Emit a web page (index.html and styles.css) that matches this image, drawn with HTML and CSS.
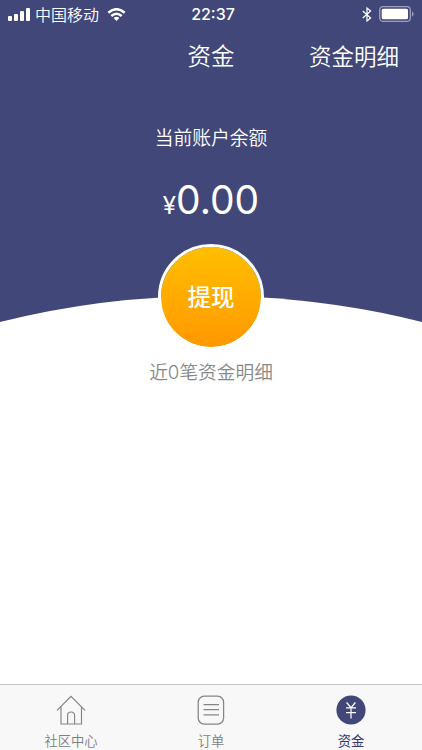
FILE: index.html
```html
<!DOCTYPE html>
<html lang="zh-CN">
<head>
<meta charset="utf-8">
<meta name="viewport" content="width=device-width, initial-scale=1">
<title>资金</title>
<link rel="stylesheet" href="styles.css">
</head>
<body>
<div class="app">
  <main class="content">
    <section class="hero">
      <svg class="hero-curve" viewBox="0 0 422 28" aria-hidden="true"><path d="M0 27A869 869 0 0 1 422 27V28H0Z" fill="#fff"/></svg>
      <div class="status">
        <div class="status-left">
          <svg class="signal" viewBox="0 0 23 14" fill="#fff"><rect x="0" y="9" width="4" height="5" rx="1"/><rect x="6" y="7" width="4" height="7" rx="1"/><rect x="12" y="4" width="4" height="10" rx="1"/><rect x="18" y="1" width="4" height="13" rx="1"/></svg>
          <span class="carrier">中国移动</span>
          <svg class="wifi" viewBox="0 0 18 13"><g fill="none" stroke="#fff" stroke-width="2.5"><path d="M.8 4.8Q9-2.4 17.2 4.8"/><path d="M3.8 8Q9 3.4 14.2 8"/></g><path d="M6.1 10Q9 7.6 11.9 10L9 13Z" fill="#fff"/></svg>
        </div>
        <time class="clock">22:37</time>
        <div class="status-right">
          <svg class="bluetooth" viewBox="0 0 10 15" fill="none" stroke="#fff" stroke-width="1.2"><path d="M.8 4 8.6 11 5 14V1L8.6 4 .8 11"/></svg>
          <svg class="battery" viewBox="0 0 36 16"><rect x=".7" y=".7" width="30.6" height="14.6" rx="3.2" fill="none" stroke="#9ea0c0" stroke-width="1.3"/><rect x="2.7" y="2.7" width="26.3" height="10.6" rx="1.5" fill="#fff"/><path d="M33 5.2Q36.4 8 33 10.8Z" fill="#9ea0c0"/></svg>
        </div>
      </div>
      <header class="nav">
        <h1 class="nav-title">资金</h1>
        <a class="nav-link">资金明细</a>
      </header>
      <p class="balance-label">当前账户余额</p>
      <p class="balance"><span class="currency">¥</span><span class="amount">0.00</span></p>
    </section>
    <button class="withdraw" type="button">提现</button>
    <p class="recent">近<span class="count">0</span>笔资金明细</p>
  </main>
  <nav class="tabs">
    <a class="tab">
      <svg class="tab-icon" viewBox="0 0 30 30" fill="none" stroke="#858585" stroke-width="1.15"><path d="M1 15.3 15 1.3 29 15.3M5 11.5V29H25.5V11.5M11.6 29V20.2Q11.6 17 15 17T18.6 20.2V29"/></svg>
      <span>社区中心</span>
    </a>
    <a class="tab">
      <svg class="tab-icon" viewBox="0 0 30 30" fill="none" stroke="#858585" stroke-width="1.25"><rect x="2.2" y="1.2" width="25.4" height="27.8" rx="6"/><path d="M7.5 9.5H23M7.5 14.7H23M7.5 19.8H23"/></svg>
      <span>订单</span>
    </a>
    <a class="tab tab-active">
      <svg class="tab-icon" viewBox="0 0 30 30"><circle cx="15" cy="15" r="14.6" fill="#424779"/><path d="M10.6 7.5 15 12.7 19.4 7.5M10 12.9H20M10 17.5H20M15 12.7V23.6" fill="none" stroke="#fff" stroke-width="1.25"/></svg>
      <span>资金</span>
    </a>
  </nav>
</div>
</body>
</html>
```
FILE: styles.css
```css
* {
  box-sizing: border-box;
}

body,
h1,
p {
  margin: 0;
  font-weight: 350;
}

body {
  background: #fff;
  font-family: "Noto Sans CJK SC", sans-serif;
}

svg {
  display: block;
}

.app {
  display: flex;
  flex-direction: column;
  height: 750px;
  overflow: hidden;
}

.content {
  flex: 1;
  display: flex;
  flex-direction: column;
  align-items: center;
}

.hero {
  position: relative;
  width: 100%;
  height: 323px;
  background: #424779;
  color: #fff;
  text-align: center;
}

.hero-curve {
  position: absolute;
  left: 0;
  bottom: 0;
  width: 100%;
  height: 28px;
}

.status {
  display: grid;
  grid-template-columns: 1fr auto 1fr;
  align-items: center;
  height: 28px;
  padding: 0 7px 0 8px;
}

.status-left,
.status-right {
  display: flex;
  align-items: center;
}

.status-right {
  justify-content: flex-end;
  gap: 7px;
}

.signal {
  width: 23px;
  height: 14px;
}

.carrier {
  margin: 0 8px 0 4px;
  font-size: 16px;
  line-height: 28px;
}

.wifi {
  width: 19px;
  height: 13px;
}

.clock {
  padding-left: 3px;
  font: 500 16px/28px Inter, sans-serif;
}

.bluetooth {
  width: 10px;
  height: 15px;
}

.battery {
  width: 36px;
  height: 16px;
}

.nav {
  display: grid;
  grid-template-columns: 1fr auto 1fr;
  align-items: center;
  height: 54px;
  padding: 0 23px;
}

.nav-title {
  grid-column: 2;
  font-size: 23.5px;
  line-height: 54px;
}

.nav-link {
  justify-self: end;
  font-size: 22.5px;
  line-height: 54px;
}

.balance-label {
  margin-top: 39px;
  font-size: 18.8px;
  line-height: 32px;
}

.balance {
  display: flex;
  justify-content: center;
  align-items: baseline;
  margin-top: 17px;
  font-family: Inter, sans-serif;
  font-weight: 400;
  line-height: 60px;
}

.currency {
  font-size: 24px;
}

.amount {
  font-size: 39px;
}

.withdraw {
  position: relative;
  width: 106px;
  height: 106px;
  margin-top: -79px;
  padding: 0 0 2px;
  border: 3px solid #fff;
  border-radius: 50%;
  background: linear-gradient(#ffbf00, #ff9800) padding-box;
  color: #fff;
  font-family: inherit;
  font-size: 23.5px;
  font-weight: 500;
}

.recent {
  margin-top: 6px;
  color: #888;
  font-size: 18.7px;
  line-height: 30px;
}

.count {
  font-family: Inter, sans-serif;
}

.tabs {
  display: grid;
  grid-template-columns: repeat(3, 140px);
  justify-content: center;
  height: 66px;
  border-top: 1px solid #c5c5c7;
  background: #f8f8f8;
}

.tab {
  display: flex;
  flex-direction: column;
  align-items: center;
  padding-top: 10px;
  color: #808080;
  font-size: 13.3px;
  line-height: 20px;
}

.tab span {
  margin-top: 6px;
}

.tab-icon {
  width: 30px;
  height: 30px;
}

.tab-active {
  color: #33386d;
  font-weight: 400;
}
```
